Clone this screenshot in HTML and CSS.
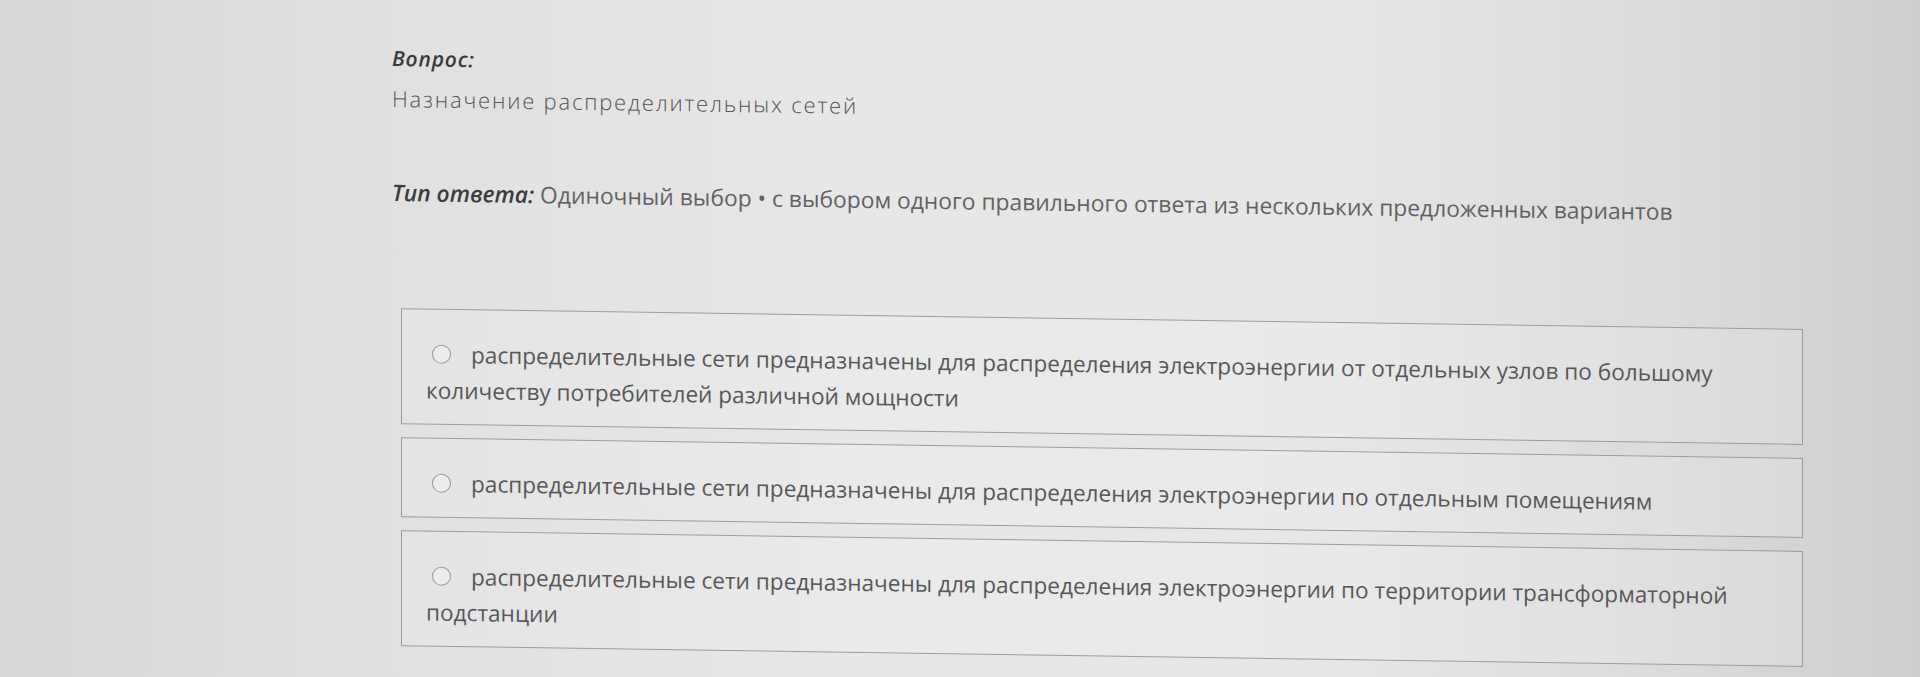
FILE: index.html
```html
<!DOCTYPE html>
<html lang="ru">
<head>
  <meta charset="utf-8">
  <title>Вопрос</title>
  <link rel="stylesheet" href="styles.css">
</head>
<body>
<main class="question">
  <div class="q-label">Вопрос:</div>
  <div class="q-title">Назначение распределительных сетей</div>

  <div class="q-type">
    <span class="q-type-label">Тип ответа:</span> Одиночный выбор • с выбором одного правильного ответа из нескольких предложенных вариантов
  </div>

  <div class="answers">
    <label class="answer">
      <input type="radio" name="answer">распределительные сети предназначены для распределения электроэнергии от отдельных узлов по большому количеству потребителей различной мощности
    </label>
    <label class="answer">
      <input type="radio" name="answer">распределительные сети предназначены для распределения электроэнергии по отдельным помещениям
    </label>
    <label class="answer">
      <input type="radio" name="answer">распределительные сети предназначены для распределения электроэнергии по территории трансформаторной подстанции
    </label>
  </div>
</main>
</body>
</html>
```

FILE: styles.css
```css
body {
    margin: 0;
    height: 100vh;
    overflow: hidden;
    font-family: "Open Sans", "Noto Sans", sans-serif;
    color: #5c5c5c;
    background: linear-gradient(to right, #d6d6d6 0%, #e0e0e0 18%, #e7e7e7 45%, #e6e6e6 70%, #dadada 88%, #cdcdcd 100%);
}

.question {
    padding: 44px 0 0 392px;
    transform: skewY(0.85deg);
    transform-origin: 392px 0;
}

.q-label {
    font-size: 21px;
    line-height: 28px;
    font-style: italic;
    font-weight: 600;
    letter-spacing: 0.8px;
    color: #3a3a3a;
}

.q-title {
    margin-top: 11px;
    font-size: 22px;
    line-height: 30px;
    font-weight: 300;
    letter-spacing: 1.8px;
    color: #555;
}

.q-type {
    margin-top: 65px;
    font-size: 22.8px;
    line-height: 30px;
    color: #626262;
}

.q-type-label {
    font-style: italic;
    font-weight: 600;
    color: #3c3c3c;
}

.answers {
    margin-top: 100px;
    margin-left: 9px;
    width: 1402px;
    display: flex;
    flex-direction: column;
    gap: 13px;
}

.answer {
    display: block;
    border: 1px solid #9c9c9c;
    padding: 27px 40px 15px 24px;
    font-size: 22.6px;
    line-height: 36px;
    color: #585858;
    background-color: rgba(255, 255, 255, 0.12);
}

.answer input {
    appearance: none;
    margin: 0 20px 0 6px;
    width: 19px;
    height: 19px;
    border: 1.5px solid #9a9a9a;
    border-radius: 50%;
    background-color: #ececec;
    vertical-align: -1px;
}
```
